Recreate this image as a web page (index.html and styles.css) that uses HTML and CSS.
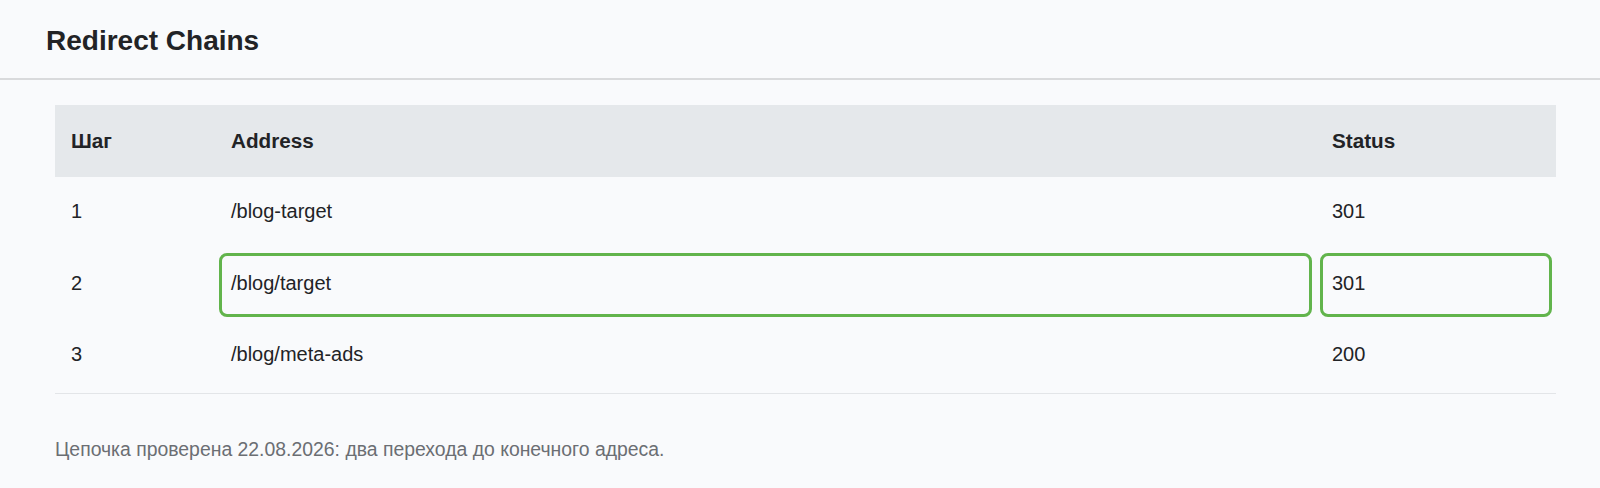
FILE: index.html
```html
<!DOCTYPE html>
<html lang="ru">
<head>
    <meta charset="UTF-8">
    <title>Redirect Chains</title>
    <link rel="stylesheet" href="styles.css">
</head>
<body>
    <header class="page-header">
        <h1>Redirect Chains</h1>
    </header>

    <main class="content">
        <table class="chain-table">
            <colgroup>
                <col class="col-step">
                <col class="col-address">
                <col class="col-status">
            </colgroup>
            <thead>
                <tr>
                    <th>Шаг</th>
                    <th>Address</th>
                    <th>Status</th>
                </tr>
            </thead>
            <tbody>
                <tr>
                    <td>1</td>
                    <td>/blog-target</td>
                    <td>301</td>
                </tr>
                <tr>
                    <td>2</td>
                    <td class="marked">/blog/target</td>
                    <td class="marked">301</td>
                </tr>
                <tr>
                    <td>3</td>
                    <td>/blog/meta-ads</td>
                    <td>200</td>
                </tr>
            </tbody>
        </table>

        <p class="note">Цепочка проверена 22.08.2026: два перехода до конечного адреса.</p>
    </main>
</body>
</html>
```

FILE: styles.css
```css
body {
    margin: 0;
    font-family: "Liberation Sans", Arial, sans-serif;
    background: #f9fafc;
    color: #222326;
}

.page-header {
    height: 80px;
    padding: 3px 0 0 46px;
    box-sizing: border-box;
    display: flex;
    align-items: center;
    border-bottom: 2px solid #d9dadc;
}

.page-header h1 {
    margin: 0;
    font-size: 28px;
    font-weight: bold;
}

.content {
    padding: 25px 44px 0 55px;
}

.chain-table {
    width: 100%;
    border-collapse: collapse;
    font-size: 20px;
}

.col-step {
    width: 160px;
}

.col-status {
    width: 240px;
}

.chain-table th,
.chain-table td {
    height: 72px;
    padding: 0 16px;
    text-align: left;
    box-sizing: border-box;
}

.chain-table td {
    padding-bottom: 4px;
}

.chain-table th {
    background: #e5e8eb;
    font-size: 20.7px;
    font-weight: bold;
}

.chain-table tbody tr:last-child td {
    border-bottom: 1px solid #e3e5e8;
}

.chain-table td.marked {
    position: relative;
}

.chain-table td.marked::after {
    content: "";
    position: absolute;
    inset: 4px;
    border: 3px solid #62b44c;
    border-radius: 8px;
}

.note {
    margin: 44px 0 0;
    font-size: 19.4px;
    color: #6b6e73;
}
```
